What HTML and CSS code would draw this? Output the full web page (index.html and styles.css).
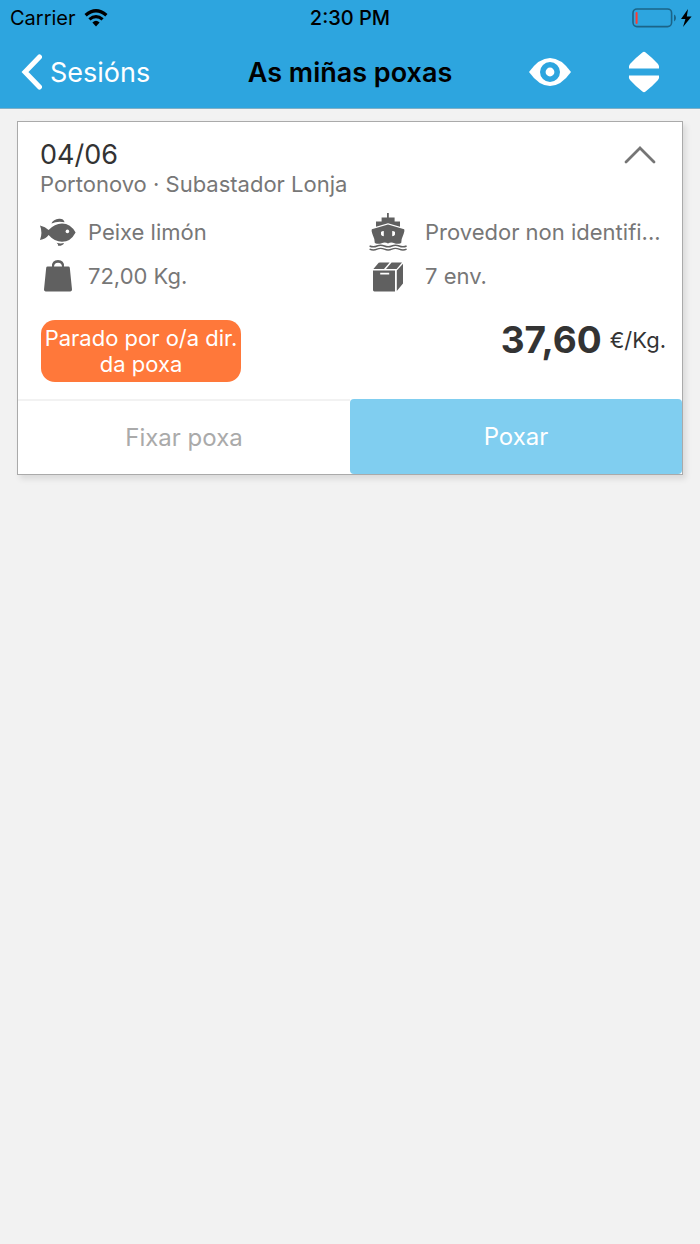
FILE: index.html
```html
<!DOCTYPE html>
<html lang="gl">
<head>
    <meta charset="UTF-8">
    <meta name="viewport" content="width=device-width, initial-scale=1.0">
    <title>As miñas poxas</title>
    <link rel="stylesheet" href="styles.css">
</head>
<body>
    <header class="header">
        <!-- Status bar -->
        <div class="status">
            <div class="status-left">
                <span>Carrier</span>
                <svg width="24" height="18" viewBox="0 0 24 18">
                    <path d="M1.600 6.200Q12-2.600 22.400 6.200" fill="none" stroke="#000" stroke-width="3.4"/>
                    <path d="M5.400 10.400Q12 4.800 18.600 10.400" fill="none" stroke="#000" stroke-width="3.2"/>
                    <path d="M8.400 13.400Q12 10.200 15.600 13.400L12 17.400z"/>
                </svg>
            </div>
            <span class="clock">2:30 PM</span>
            <div class="status-right">
                <svg width="60" height="20" viewBox="0 0 60 20">
                    <rect x="1" y="1" width="38.6" height="17.6" rx="4" fill="none" stroke="#1b6488" stroke-width="1.6"/>
                    <rect x="3.6" y="4" width="2" height="12" rx="1" fill="#ff3b30"/>
                    <path d="M42 6.6q2 1 2 3.4t-2 3.4z" fill="#1b6488"/>
                    <path d="M56 1L49 11h4.400L51 19l8.600-10.600h-4.800z"/>
                </svg>
            </div>
        </div>

        <!-- Navigation bar -->
        <nav class="nav">
            <a class="back" href="#">
                <svg width="22" height="38" viewBox="0 0 22 38">
                    <path d="M19.500 4L5 19l14.500 15" fill="none" stroke="#fff" stroke-width="5" stroke-linecap="round"/>
                </svg>
                <span>Sesións</span>
            </a>
            <h1 class="title">As miñas poxas</h1>
            <div class="actions">
                <button type="button" class="icon-button" aria-label="Ver">
                    <svg width="44" height="30" viewBox="0 0 44 30">
                        <path d="M1 15Q11 1 22 1t21 14Q33 29 22 29T1 15z" fill="#fff"/>
                        <circle cx="22" cy="15" r="7.2" fill="#fff" stroke="#2da5df" stroke-width="5.6"/>
                    </svg>
                </button>
                <button type="button" class="icon-button" aria-label="Ordenar">
                    <svg width="32" height="42" viewBox="0 0 32 42">
                        <path d="M1 17.6Q.4 15 2 13Q8.400 6 14.400 1.400q1.600-1.200 3.200 0Q23.600 6 30 13Q31.600 15 31 17.6zM1 24.4h30q.6 2.600-1 4.600Q23.600 36 17.600 40.600q-1.600 1.200-3.200 0Q8.400 36 2 29Q.4 27 1 24.4z" fill="#fff"/>
                    </svg>
                </button>
            </div>
        </nav>
    </header>

    <main class="content">
        <section class="card">
            <div class="card-body">
                <div class="card-head">
                    <div>
                        <h2 class="date">04/06</h2>
                        <p class="place">Portonovo · Subastador Lonja</p>
                    </div>
                    <button type="button" class="icon-button" aria-label="Pregar">
                        <svg width="32" height="20" viewBox="0 0 32 20">
                            <path d="M2 17L16 3l14 14" fill="none" stroke="#757575" stroke-width="2.8" stroke-linecap="round"/>
                        </svg>
                    </button>
                </div>

                <ul class="details">
                    <li>
                        <svg width="38" height="38" viewBox="0 0 38 38" fill="#606060">
                            <path d="M0 12.400Q5.400 13.600 8.600 17Q14.600 10.400 22 10.400Q30.600 10.400 35.600 19.400Q30.600 28.800 22 28.800Q14.600 28.800 8.600 22Q6 25.800 0 27Q2.800 19.600 0 12.400z"/>
                            <path d="M11.400 10.400Q13.400 6.400 19 5.800q4.400-.4 5.600 3.400Q17.400 7.800 11.400 10.400zM16.600 29.800q4 1.200 7.400.2-.8 3-6.200 2.800 1-.8-1.200-3z"/>
                            <circle cx="27.400" cy="18.400" r="1.800" fill="#fff"/>
                        </svg>
                        <span>Peixe limón</span>
                    </li>
                    <li>
                        <svg width="38" height="38" viewBox="0 0 38 38" fill="#606060">
                            <path d="M12.600 4.400H18V0h1.800v4.400h5.800v4H31v5.400L19 10.200 7 13.800V8.400h5.600z"/>
                            <path fill-rule="evenodd" d="M19 11.400L35.200 16.200Q36 18 34.600 21Q32.200 26 32.200 30Q28.600 31.600 25.400 30.200Q22 28.600 19 30.400Q16 28.600 12.600 30.200Q9.400 31.600 5.800 30Q5.800 26 3.400 21Q2 18 2.800 16.200zM12 19v2.600q.4 1.600 2.800 1.600V18q-2 0-2.800 1zM23.200 18v5.200q2.400 0 2.800-1.600V19q-.8-1-2.800-1z"/>
                            <path d="M.6 33q3.800 1.600 7.400 0t7.400 0 7.400 0 7.400 0 7.400 0M.6 36.200q3.800 1.600 7.400 0t7.400 0 7.400 0 7.400 0 7.400 0" fill="none" stroke="#606060" stroke-width="1.4"/>
                        </svg>
                        <span>Provedor non identifi...</span>
                    </li>
                    <li>
                        <svg width="38" height="38" viewBox="0 0 38 38" fill="#606060">
                            <path fill-rule="evenodd" d="M7.600 9.600H12Q11.600 3 18 3t6 6.600h4.400q1.200 0 1.400 1.200L32 32.600q.2 1.800-1.600 1.800H5.600q-1.800 0-1.600-1.800L6.200 10.800q.2-1.200 1.400-1.200zM14 9.600h8Q21.800 5.800 18 5.800T14 9.600z"/>
                        </svg>
                        <span>72,00 Kg.</span>
                    </li>
                    <li>
                        <svg width="38" height="38" viewBox="0 0 38 38" fill="#606060">
                            <path fill-rule="evenodd" d="M4 13.400h22v21H5.400Q4 34.400 4 33zM11.200 15.800v1.800h9v-1.800z"/>
                            <path d="M4.400 12L8.600 7Q9.600 5.600 11 5.600H20.600l-5.600 6.400zM17 12L22.600 5.600H33L27.600 12zM27.800 13.600L34 6.800v19.800L27.800 34z"/>
                        </svg>
                        <span>7 env.</span>
                    </li>
                </ul>

                <div class="summary">
                    <p class="badge">Parado por o/a dir. da poxa</p>
                    <p class="price"><strong>37,60</strong> <span>€/Kg.</span></p>
                </div>
            </div>

            <div class="card-buttons">
                <button type="button" class="btn">Fixar poxa</button>
                <button type="button" class="btn btn-primary">Poxar</button>
            </div>
        </section>
    </main>
</body>
</html>
```
FILE: styles.css
```css
* {
    box-sizing: border-box;
}
body {
    margin: 0;
    background-color: #f2f2f2;
    font-family: Inter, "Liberation Sans", sans-serif;
    color: #333;
}
h1, h2, p, ul {
    margin: 0;
    padding: 0;
}
svg {
    display: block;
    flex-shrink: 0;
}
button {
    border: none;
    padding: 0;
    background: none;
    font-family: inherit;
    cursor: pointer;
}

/* Header */
.header {
    background-color: #2da5df;
    border-bottom: 1px solid #7fafc6;
}
.status {
    display: grid;
    grid-template-columns: 1fr auto 1fr;
    align-items: center;
    height: 36px;
    padding: 0 8px;
    font-size: 20px;
    color: #000;
}
.status-left {
    display: flex;
    align-items: center;
    gap: 8px;
    padding-left: 2px;
}
.clock {
    font-weight: 500;
}
.status-right {
    display: flex;
    justify-content: flex-end;
}
.nav {
    display: grid;
    grid-template-columns: 1fr auto 1fr;
    align-items: center;
    height: 72px;
    padding: 0 20px;
}
.back {
    display: flex;
    align-items: center;
    gap: 8px;
    color: #fff;
    font-size: 27px;
    text-decoration: none;
}
.title {
    font-size: 27px;
    font-weight: 600;
    color: #000;
}
.actions {
    display: flex;
    align-items: center;
    justify-content: flex-end;
    gap: 56px;
    padding-right: 20px;
}

/* Auction card */
.content {
    padding: 12px 17px;
}
.card {
    background-color: #fff;
    border: 1px solid #aaa;
    box-shadow: 3px 4px 6px rgba(0, 0, 0, 0.1);
}
.card-body {
    padding: 16px 16px 17px 22px;
}
.card-head {
    display: flex;
    justify-content: space-between;
    align-items: flex-start;
    padding-right: 10px;
}
.card-head .icon-button {
    padding-top: 7px;
}
.date {
    font-size: 27px;
    font-weight: 400;
    line-height: 34px;
}
.place {
    font-size: 22px;
    line-height: 24px;
    color: #777;
}
.details {
    display: grid;
    grid-template-columns: 1fr 1fr;
    grid-auto-rows: 44px;
    column-gap: 32px;
    padding-top: 14px;
    list-style: none;
    font-size: 22px;
    color: #777;
}
.details li {
    display: flex;
    align-items: center;
    gap: 10px;
    min-width: 0;
}
.details li:nth-child(even) {
    gap: 18px;
}
.details span {
    overflow: hidden;
    text-overflow: ellipsis;
    white-space: nowrap;
}
.summary {
    display: flex;
    justify-content: space-between;
    align-items: flex-start;
    padding: 22px 0 0 1px;
}
.badge {
    width: 200px;
    padding: 5px 0;
    border-radius: 14px;
    background-color: #ff783a;
    color: #fff;
    font-size: 22px;
    line-height: 26px;
    text-align: center;
}
.price {
    display: flex;
    align-items: center;
    gap: 8px;
    font-size: 22px;
    line-height: 40px;
}
.price strong {
    font-size: 37px;
}
.card-buttons {
    display: grid;
    grid-template-columns: 1fr 1fr;
}
.btn {
    height: 75px;
    border-top: 2px solid #f2f2f2;
    font-size: 24px;
    color: #aaa;
}
.btn-primary {
    border-top: none;
    border-radius: 4px;
    background-color: #80cef0;
    color: #fff;
}
```
